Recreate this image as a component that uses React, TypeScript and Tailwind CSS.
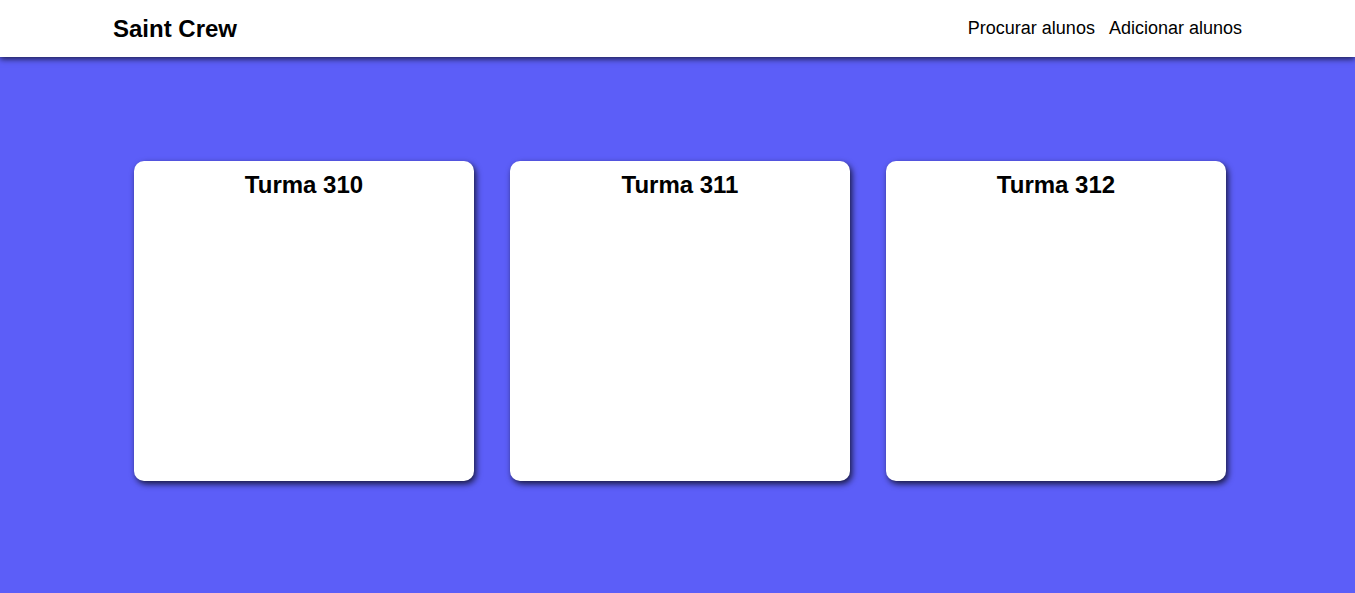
export default function App() {
  const turmas = ["Turma 310", "Turma 311", "Turma 312"];
  return (
    <div className="min-h-[593px] bg-[#5c5ef8] font-['Liberation_Sans',Arial,sans-serif] text-black">
      <header className="relative z-10 flex h-[57px] items-center justify-between bg-white pl-[113px] pr-[113px] shadow-[0_2px_6px_rgba(0,0,0,0.7)]">
        <h1 className="text-[24px] font-bold leading-[26px]">Saint Crew</h1>
        <nav className="flex gap-[14px] text-[18px]">
          <a href="#">Procurar alunos</a>
          <a href="#">Adicionar alunos</a>
        </nav>
      </header>
      <main className="flex gap-[36px] pl-[134px] pt-[104px]">
        {turmas.map((t) => (
          <div
            key={t}
            className="h-[320px] w-[340px] rounded-[10px] bg-white pt-[6px] text-center shadow-[2px_3px_6px_rgba(0,0,0,0.75)]"
          >
            <h2 className="text-[24px] font-bold">{t}</h2>
          </div>
        ))}
      </main>
    </div>
  );
}
